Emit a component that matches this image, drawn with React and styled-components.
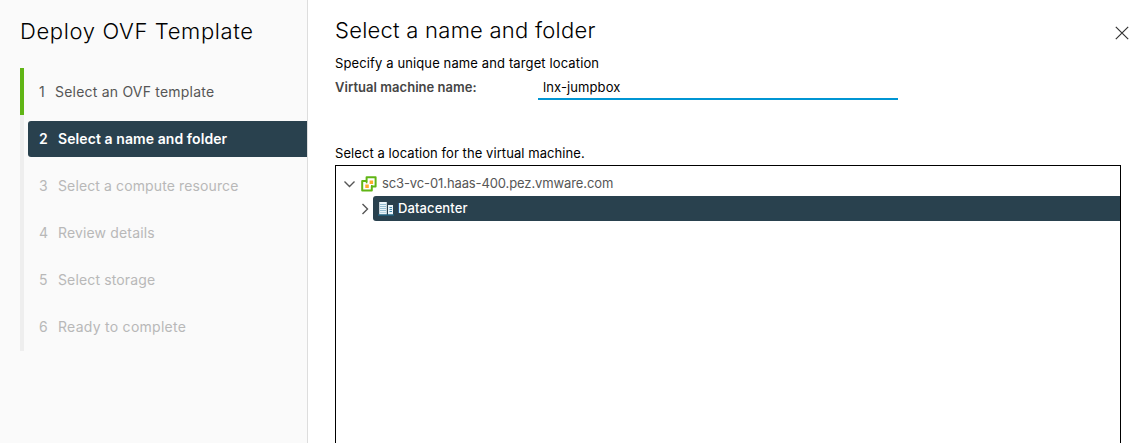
import React from "react";
import styled, { createGlobalStyle } from "styled-components";

const GlobalStyle = createGlobalStyle`
  * { box-sizing: border-box; }
  body {
    margin: 0;
    background: #fff;
    overflow: hidden;
    font-family: Inter, "Open Sans", sans-serif;
    color: #000;
  }
`;

const Label = styled.span`
  letter-spacing: ${(p) => p.$track || 0}px;
  white-space: nowrap;
`;

const Wizard = styled.div`
  display: flex;
  height: 443px;
  width: 1145px;
`;

const Sidebar = styled.nav`
  width: 308px;
  flex: none;
  background: #fafafa;
  border-right: 1px solid #ddd;
  padding: 16px 0 0 20px;
`;

const SidebarTitle = styled.h1`
  margin: 0 0 22px;
  font-size: 22px;
  font-weight: 300;
  line-height: 30px;
`;

const Steps = styled.ol`
  list-style: none;
  margin: 0;
  padding: 0 0 1px;
  background: linear-gradient(#eee, #eee) left / 4px 100% no-repeat;
`;

const Step = styled.li`
  height: 47px;
  display: flex;
  align-items: center;
  padding: 1px 0 0 4px;
  border-left: 4px solid ${(p) => (p.$state === "done" ? "#60b515" : "transparent")};
`;

const StepButton = styled.div`
  flex: 1;
  height: 36px;
  display: flex;
  align-items: center;
  gap: ${(p) => (p.$state === "done" ? 11 : 10.5)}px;
  padding: 0 0 2px 11px;
  border-radius: 3px 0 0 3px;
  font-size: 14px;
  font-weight: ${(p) => (p.$state === "active" ? 600 : 400)};
  background: ${(p) => (p.$state === "active" ? "#29414e" : "transparent")};
  color: ${(p) => ({ done: "#565656", active: "#fff", todo: "#b8b8b8" })[p.$state]};
`;

const StepNumber = styled.span`
  width: ${(p) => (p.$state === "done" ? 5 : 8.5)}px;
`;

const Main = styled.main`
  flex: 1;
  padding: 15px 24px 0 27px;
  display: flex;
  flex-direction: column;
`;

const Header = styled.header`
  display: flex;
  justify-content: space-between;
  height: 38px;
  margin-right: -9px;
`;

const PageTitle = styled.h2`
  margin: 0;
  font-size: 22px;
  font-weight: 300;
  line-height: 30px;
`;

const CloseButton = styled.button`
  border: 0;
  padding: 0;
  margin-top: 10px;
  width: 16px;
  height: 16px;
  background: none;
  svg { display: block; }
`;

const Text = styled.p`
  margin: 0;
  font-size: 13px;
  line-height: 20px;
`;

const Field = styled.div`
  display: flex;
  height: 27px;
  font-size: 13px;
  line-height: 24px;
`;

const FieldName = styled.label`
  width: 203px;
  padding-top: 3px;
  font-weight: 600;
  color: #454545;
  line-height: 24px;
  margin-top: -1px;
`;

const FieldValue = styled.div`
  width: 360px;
  padding: 2px 0 0 5px;
  border-bottom: 2px solid #0095d3;
`;

const LocationHint = styled(Text)`
  margin-top: 43px;
`;

const Tree = styled.div`
  flex: 1;
  margin-top: 2px;
  border: 1px solid #000;
  border-bottom: 0;
  padding-top: 5px;
  font-size: 13px;
`;

const TreeRow = styled.div`
  height: 25px;
  display: flex;
  align-items: center;
  color: #565656;
  padding-left: ${(p) => 7 + p.$depth * 16}px;
`;

const Caret = styled.svg`
  flex: none;
  margin-right: ${(p) => p.$gap}px;
`;

const Node = styled.div`
  flex: 1;
  height: 25px;
  display: flex;
  align-items: center;
  gap: ${(p) => (p.$selected ? 4 : 5)}px;
  padding-left: 5px;
  border-radius: 3px 0 0 3px;
  font-weight: ${(p) => (p.$selected ? 500 : 400)};
  background: ${(p) => (p.$selected ? "#29414e" : "transparent")};
  color: ${(p) => (p.$selected ? "#fff" : "#565656")};
`;

const NodeLabel = styled(Label)`
  padding-bottom: 2px;
`;

const VCenterIcon = () => (
  <svg width="16" height="16" viewBox="0 0 16 16" fill="none">
    <path d="M5.6 1.2h9v9.4h-3.8v4H1.2V5h4.4z" stroke="#60b515" strokeWidth="2" strokeLinejoin="round" />
    <path d="M5.6 5v2.2M10.8 10.6V9" stroke="#60b515" strokeWidth="1.6" />
    <path d="M8.6 4.4h3.5v3.5H8.6zM4.3 8.4h3.5v3.5H4.3z" fill="#fdac2b" />
  </svg>
);

const DatacenterIcon = () => (
  <svg width="16" height="16" viewBox="0 0 16 16">
    <path d="M1.2 1h7.6v12.4H1.2zM10 4h5v9.4h-5z" fill="#eaf5fa" />
    <path d="M3 3v8.6M5 3v8.6M7 3v8.6" stroke="#3f87aa" strokeDasharray="1 1" />
    <path d="M11.5 6.5H14M11.5 8.5H14M11.5 10.5H14" stroke="#3f87aa" />
    <path d="M0 14h16" stroke="#1f7397" />
  </svg>
);

const steps = [
  ["Select an OVF template", "done", 0.21],
  ["Select a name and folder", "active", 0.08],
  ["Select a compute resource", "todo", 0.12],
  ["Review details", "todo", 0.15],
  ["Select storage", "todo", 0.14],
  ["Ready to complete", "todo", 0.27],
];

export default function App() {
  return (
    <>
      <GlobalStyle />
      <Wizard>
        <Sidebar>
          <SidebarTitle><Label $track={0.63}>Deploy OVF Template</Label></SidebarTitle>
          <Steps>
            {steps.map(([name, state, track], i) => (
              <Step key={name} $state={state}>
                <StepButton $state={state}>
                  <StepNumber $state={state}>{i + 1}</StepNumber>
                  <Label $track={track}>{name}</Label>
                </StepButton>
              </Step>
            ))}
          </Steps>
        </Sidebar>
        <Main>
          <Header>
            <PageTitle><Label $track={0.25}>Select a name and folder</Label></PageTitle>
            <CloseButton aria-label="Close">
              <svg width="16" height="16" viewBox="0 0 16 16">
                <path d="M1.8 1.8l12.4 12.4M14.2 1.8L1.8 14.2" stroke="#333" strokeWidth="1.2" />
              </svg>
            </CloseButton>
          </Header>
          <Text><Label $track={0.12}>Specify a unique name and target location</Label></Text>
          <Field>
            <FieldName><Label $track={0.04}>Virtual machine name:</Label></FieldName>
            <FieldValue><Label $track={0.1}>lnx-jumpbox</Label></FieldValue>
          </Field>
          <LocationHint><Label $track={0.07}>Select a location for the virtual machine.</Label></LocationHint>
          <Tree>
            <TreeRow $depth={0}>
              <Caret $gap={0} width="13" height="12" viewBox="0 0 13 12">
                <path d="M1.5 3.5l5 5 5-5" fill="none" stroke="#565656" strokeWidth="1.4" />
              </Caret>
              <Node>
                <VCenterIcon />
                <NodeLabel $track={-0.11}>sc3-vc-01.haas-400.pez.vmware.com</NodeLabel>
              </Node>
            </TreeRow>
            <TreeRow $depth={1}>
              <Caret $gap={1} width="13" height="12" viewBox="0 0 13 12">
                <path d="M3.5 1l5 5-5 5" fill="none" stroke="#565656" strokeWidth="1.4" />
              </Caret>
              <Node $selected>
                <DatacenterIcon />
                <NodeLabel $track={0.1}>Datacenter</NodeLabel>
              </Node>
            </TreeRow>
          </Tree>
        </Main>
      </Wizard>
    </>
  );
}
